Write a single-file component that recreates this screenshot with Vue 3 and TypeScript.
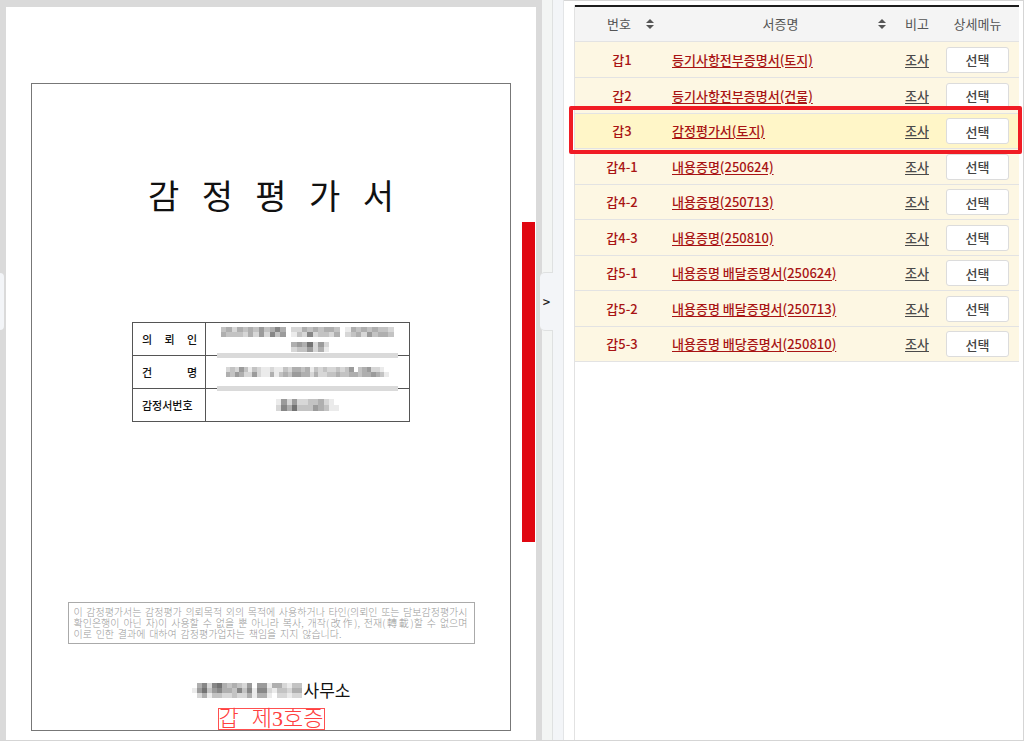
<script setup lang="ts">
import { h } from 'vue'

interface Evidence {
  no: string
  name: string
  current?: boolean
}

const evidences: Evidence[] = [
  { no: '갑1', name: '등기사항전부증명서(토지)' },
  { no: '갑2', name: '등기사항전부증명서(건물)' },
  { no: '갑3', name: '감정평가서(토지)', current: true },
  { no: '갑4-1', name: '내용증명(250624)' },
  { no: '갑4-2', name: '내용증명(250713)' },
  { no: '갑4-3', name: '내용증명(250810)' },
  { no: '갑5-1', name: '내용증명 배달증명서(250624)' },
  { no: '갑5-2', name: '내용증명 배달증명서(250713)' },
  { no: '갑5-3', name: '내용증명 배당증명서(250810)' },
]

// Each digit is the darkness of one mosaic cell, 0 being blank.
const masks = {
  client: [
    '34243435346402243434430143434332',
    '43332425263501326233240234253443',
    '00000000000000000000000000000000',
    '00000000000004547252000000000000',
    '00000000000002335241000000000000',
  ],
  subject: [
    '2325313211211324434132322323503452210',
    '4354225211413435544242233433443445431',
  ],
  number: ['152522334210', '264733354311'],
  office: ['0462674343250551442133', '1573564436361662133244', '0241332232241441022122'],
}

function Mosaic(props: { rows: string[]; w: number; h: number }) {
  const cols = props.rows[0].length
  const cells = props.rows.flatMap((row, y) =>
    [...row].map((d, x) => {
      const v = 255 - Number(d) * 20
      return h('rect', { x: x * props.w, y: y * props.h, width: props.w, height: props.h, fill: `rgb(${v},${v},${v})` })
    }),
  )
  const width = cols * props.w
  const height = props.rows.length * props.h
  return h('svg', { width, height, viewBox: `0 0 ${width} ${height}`, 'shape-rendering': 'crispEdges', 'aria-hidden': 'true' }, cells)
}
Mosaic.props = ['rows', 'w', 'h']
</script>

<template>
  <main class="viewer">
    <section class="document">
      <button class="edge" type="button" aria-label="목록"></button>
      <article class="paper">
        <div class="frame">
          <h1>감 정 평 가 서</h1>
          <table class="summary">
            <tbody>
              <tr>
                <th scope="row">의 뢰 인</th>
                <td class="strip"><Mosaic class="mosaic" :rows="masks.client" :w="5.4" :h="5" /></td>
              </tr>
              <tr>
                <th scope="row">건 명</th>
                <td class="strip"><Mosaic class="mosaic" :rows="masks.subject" :w="4.4" :h="5" /></td>
              </tr>
              <tr>
                <th scope="row">감정서번호</th>
                <td><Mosaic class="mosaic" :rows="masks.number" :w="5.3" :h="6" /></td>
              </tr>
            </tbody>
          </table>
          <p class="notice">
            이 감정평가서는 감정평가 의뢰목적 외의 목적에 사용하거나 타인(의뢰인 또는 담보감정평가시<br />
            확인은행이 아닌 자)이 사용할 수 없을 뿐 아니라 복사, 개작(改作), 전재(轉載)할 수 없으며<br />
            <span class="last">이로 인한 결과에 대하여 감정평가업자는 책임을 지지 않습니다.</span>
          </p>
          <div class="office"><Mosaic class="mosaic" :rows="masks.office" :w="5" :h="5" /><span>사무소</span></div>
          <div class="stamp">갑 제3호증</div>
        </div>
      </article>
      <div class="marker"></div>
    </section>

    <div class="splitter">
      <button class="toggle" type="button">&gt;</button>
    </div>

    <section class="list">
      <table class="evidence">
        <colgroup>
          <col class="c-no" />
          <col />
          <col class="c-note" />
          <col class="c-menu" />
        </colgroup>
        <thead>
          <tr>
            <th scope="col">
              <div class="sort first">
                <span>번호</span>
                <svg width="8" height="10" viewBox="0 0 8 10"><path d="M4 0L8 4H0ZM4 10L0 6H8Z" fill="#555" /></svg>
              </div>
            </th>
            <th scope="col">
              <div class="sort">
                <span>서증명</span>
                <svg width="8" height="10" viewBox="0 0 8 10"><path d="M4 0L8 4H0ZM4 10L0 6H8Z" fill="#555" /></svg>
              </div>
            </th>
            <th scope="col">비고</th>
            <th scope="col" class="menu">상세메뉴</th>
          </tr>
        </thead>
        <tbody>
          <tr v-for="item in evidences" :key="item.no" :class="{ current: item.current }">
            <td class="no">{{ item.no }}</td>
            <td class="name"><a href="#">{{ item.name }}</a></td>
            <td class="note"><a href="#">조사</a></td>
            <td class="menu"><button type="button">선택</button></td>
          </tr>
        </tbody>
      </table>
    </section>
  </main>
</template>

<style>
body {
  margin: 0;
}
</style>

<style scoped>
.viewer {
  display: grid;
  grid-template-columns: minmax(0, 542fr) 22px minmax(0, 460fr);
  box-sizing: border-box;
  min-height: 100vh;
  border-bottom: 1px solid #d5d5d5;
  background: #fff;
  font-family: "Noto Sans CJK KR", "Noto Sans", sans-serif;
  font-size: 13px;
}

button {
  font-family: inherit;
  padding: 0;
}

.document {
  position: relative;
  display: flex;
  box-sizing: border-box;
  padding: 7px 6px 0;
  background: #dadada;
}

.edge {
  position: absolute;
  left: 0;
  top: 273px;
  width: 4px;
  height: 57px;
  border: 0;
  border-radius: 0 4px 4px 0;
  background: #f3f5f8;
}

.paper {
  display: flex;
  flex: 1;
  min-width: 0;
  padding: 76px 25px 9px;
  background: #fff;
}

.frame {
  display: flex;
  flex: 1;
  flex-direction: column;
  align-items: center;
  min-width: 0;
  border: 1px solid #777;
  color: #111;
}

h1 {
  width: 246px;
  margin: 87px 0 0;
  font-size: 34px;
  font-weight: 400;
  line-height: 48px;
  text-align-last: justify;
}

.summary {
  width: 278px;
  margin-top: 103px;
  border-collapse: collapse;
  table-layout: fixed;
}

.summary th,
.summary td {
  height: 32px;
  padding: 0;
  border: 1px solid #555;
}

.summary th {
  width: 55px;
  padding: 0 8px 0 9px;
  font-size: 11px;
  font-weight: 500;
  line-height: 16px;
  text-align-last: justify;
  white-space: nowrap;
}

.summary td {
  position: relative;
  text-align: center;
}

.strip::after {
  content: "";
  position: absolute;
  right: 11px;
  bottom: -3px;
  left: 11px;
  height: 5px;
  background: #dadada;
}

.mosaic {
  display: block;
  margin: 0 auto;
}

.notice {
  box-sizing: border-box;
  width: 407px;
  margin: 180px 0 0;
  padding: 3px 6px 4px 5px;
  border: 1px solid #aaa;
  color: #999;
  font-size: 10px;
  font-weight: 300;
  line-height: 11px;
  text-align-last: justify;
}

.notice .last {
  display: block;
  width: 268px;
}

.office {
  display: flex;
  align-items: center;
  gap: 2px;
  margin-top: auto;
  font-size: 17px;
  line-height: 24px;
}

.stamp {
  box-sizing: border-box;
  width: 107px;
  margin-top: 6px;
  border: 1px solid #ff5050;
  color: #ff4040;
  font-family: "Liberation Serif", "Noto Sans CJK KR", serif;
  font-size: 22px;
  font-weight: 300;
  line-height: 20px;
  text-align-last: justify;
}

.marker {
  position: absolute;
  top: 222px;
  right: 7px;
  width: 13px;
  height: 320px;
  background: #e00711;
}

.splitter {
  position: relative;
  box-sizing: border-box;
  border-right: 1px solid #e3e5e7;
  background: linear-gradient(to right, #f3f5f4 10px, #dfe1e1 10px, #dfe1e1 11px, #f3f5f8 11px);
}

.toggle {
  position: absolute;
  top: 272px;
  left: -2px;
  width: 13px;
  height: 59px;
  border: 1px solid #dfe1e1;
  border-width: 1px 0;
  border-radius: 5px 0 0 5px;
  background: #f3f5f8;
  color: #222;
  font-size: 13px;
  font-weight: 500;
}

.list {
  display: flex;
  box-sizing: border-box;
  padding: 4px 4px 0 10px;
  border-top: 1px solid #d5d5d5;
  border-right: 1px solid #d5d5d5;
}

.list::before {
  content: "";
  flex: none;
  width: 1px;
  background: #e2e2e2;
}

.evidence {
  align-self: flex-start;
  width: 100%;
  table-layout: fixed;
  border-spacing: 0;
  border-top: 2px solid #1c1c1c;
}

.c-no {
  width: 94px;
}

.c-note {
  width: 50px;
}

.c-menu {
  width: 77px;
}

.evidence th,
.evidence td {
  box-sizing: border-box;
  height: 35px;
  padding: 0;
  border-bottom: 1px solid #e3e3e3;
  line-height: 20px;
  text-align: center;
}

.evidence th {
  background: #f4f4f4;
  color: #555;
  font-weight: 400;
}

.sort {
  display: flex;
  align-items: center;
  padding: 0 6px 0 14px;
}

.sort span {
  flex: 1;
}

.sort.first {
  gap: 15px;
  padding: 0 0 0 32px;
}

.first span {
  flex: none;
}

.evidence td {
  background: #fdf7e3;
  font-weight: 500;
}

.evidence tbody tr:first-child td,
.evidence tbody tr:nth-child(even) td {
  height: 36px;
}

.evidence tbody tr.current td {
  background: #fff6c8;
}

.evidence .no,
.name a {
  color: #a81414;
}

.evidence .name {
  padding-left: 3px;
  text-align: left;
}

a {
  color: #4a4a4a;
  text-underline-offset: 2px;
}

.evidence .menu {
  padding-right: 6px;
}

.menu button {
  display: block;
  box-sizing: border-box;
  width: 63px;
  height: 26px;
  margin: 0 auto;
  border: 1px solid #dcdcdc;
  border-radius: 3px;
  background: #fff;
  color: #444;
  font-size: 13px;
  font-weight: 500;
}

.current {
  position: relative;
}

.current .no::after {
  content: "";
  position: absolute;
  inset: -8px -3px -5px -6px;
  border: 4px solid #f01c24;
  border-radius: 2px;
  pointer-events: none;
}
</style>
